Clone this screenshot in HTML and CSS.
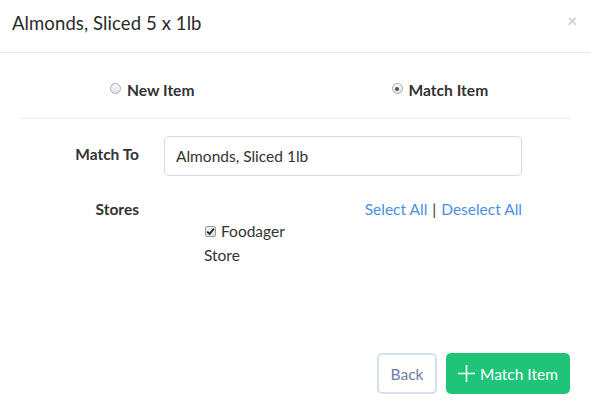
FILE: index.html
```html
<!DOCTYPE html>
<html>
<head>
<meta charset="utf-8">
<link rel="stylesheet" href="styles.css">
</head>
<body>
<div class="modal">
  <div class="modal-header">
    <h4 class="modal-title">Almonds, Sliced 5 x 1lb</h4>
    <span class="close">&times;</span>
  </div>
  <div class="modal-body">
    <div class="radio-row">
      <label class="radio-opt opt-new"><span class="radio"></span>New Item</label>
      <label class="radio-opt opt-match"><span class="radio checked"></span>Match Item</label>
    </div>
    <div class="sep"></div>
    <div class="form-row row-match">
      <div class="label">Match To</div>
      <div class="input">Almonds, Sliced 1lb</div>
    </div>
    <div class="form-row row-stores">
      <div class="label">Stores</div>
      <div class="stores-ctrl">
        <div class="links"><a>Select All</a><span class="bar">|</span><a>Deselect All</a></div>
        <div class="store-item"><span class="checkbox"><svg width="9" height="9" viewBox="0 0 9 9"><path d="M1.2 4.6 L3.6 7 L7.8 1.6" fill="none" stroke="#222" stroke-width="1.8"/></svg></span>Foodager Store</div>
      </div>
    </div>
  </div>
  <div class="modal-footer">
    <button class="btn btn-back">Back</button>
    <button class="btn btn-match"><svg class="plus" width="17" height="17" viewBox="0 0 17 17"><path d="M8.5 0 V17 M0 8.5 H17" stroke="#fff" stroke-width="1.6"/></svg>Match Item</button>
  </div>
</div>
</body>
</html>
```

FILE: styles.css
```css
* { box-sizing: border-box; }
html, body { margin: 0; padding: 0; background: #fff; }
body {
  font-family: Lato, "Open Sans", sans-serif;
  color: #333;
  width: 591px;
  height: 415px;
  overflow: hidden;
}
.modal { width: 591px; }
.modal-header {
  height: 53px;
  border-bottom: 1px solid #e8e8e8;
  display: flex;
  align-items: center;
  justify-content: space-between;
  padding: 0 14px 7px 12px;
}
.modal-title {
  margin: 0;
  font-size: 18.5px;
  font-weight: 400;
  color: #2a2a2a;
  letter-spacing: 0.1px;
}
.close {
  color: #c8d0da;
  font-size: 17px;
  font-weight: 700;
  line-height: 1;
  margin-top: -4px;
}
.modal-body { padding: 0 20px; }
.radio-row {
  display: flex;
  height: 65px;
  align-items: center;
  padding-top: 8px;
  font-weight: 700;
  font-size: 15.6px;
  color: #333;
}
.radio-opt { display: flex; align-items: center; }
.opt-new { margin-left: 90px; }
.opt-match { margin-left: 197px; }
.radio {
  width: 11px; height: 11px;
  border-radius: 50%;
  border: 1px solid #aaa;
  background: linear-gradient(#fdfdfd, #e2e2e2);
  margin-right: 6px;
  position: relative;
  top: -1px;
}
.radio.checked::after {
  content: "";
  position: absolute;
  left: 2.5px; top: 2.5px;
  width: 4px; height: 4px;
  border-radius: 50%;
  background: #555;
}
.sep { height: 1px; background: #eaeef3; }
.form-row { display: flex; }
.label {
  width: 119px;
  text-align: right;
  font-weight: 700;
  font-size: 15.5px;
  color: #333;
  flex: none;
}
.row-match { margin-top: 17px; align-items: center; }
.row-match .label { margin-top: -4px; }
.input {
  margin-left: 25px;
  width: 358px;
  height: 40px;
  border: 1px solid #cfdbe8;
  border-radius: 5px;
  padding: 0 11px;
  display: flex;
  align-items: center;
  font-size: 15.5px;
  color: #333;
}
.row-stores { margin-top: 22px; }
.row-stores .label { line-height: 22px; }
.stores-ctrl { margin-left: 25px; width: 358px; }
.links {
  text-align: right;
  font-size: 15.5px;
  line-height: 22px;
  color: #333;
}
.links a { color: #4a90e2; }
.bar { color: #333; margin: 0 5px; }
.store-item {
  margin-left: 40px;
  width: 100px;
  font-size: 15.5px;
  line-height: 23.5px;
  margin-top: 0;
}
.checkbox {
  display: inline-block;
  width: 11px; height: 11px;
  border: 1px solid #999;
  border-radius: 2px;
  background: linear-gradient(#f4f4f4, #dcdcdc);
  margin-right: 5px;
  vertical-align: 0px;
  position: relative;
  margin-left: 1px;
}
.checkbox svg { position: absolute; left: 0; top: 0; }
.modal-footer {
  display: flex;
  justify-content: flex-end;
  padding: 0 21px 0 0;
  margin-top: 86px;
  gap: 9px;
}
.btn {
  font-family: Lato, "Open Sans", sans-serif;
  font-size: 15.5px;
  height: 41px;
  border-radius: 5px;
  display: flex;
  align-items: center;
  justify-content: center;
  cursor: pointer;
}
.btn-back {
  width: 60px;
  background: #fff;
  border: 2px solid #d5e0ee;
  color: #6b7c9c;
}
.btn-match {
  width: 124px;
  background: #1fc478;
  border: none;
  color: #fff;
}
.plus { margin-right: 5px; }
```
